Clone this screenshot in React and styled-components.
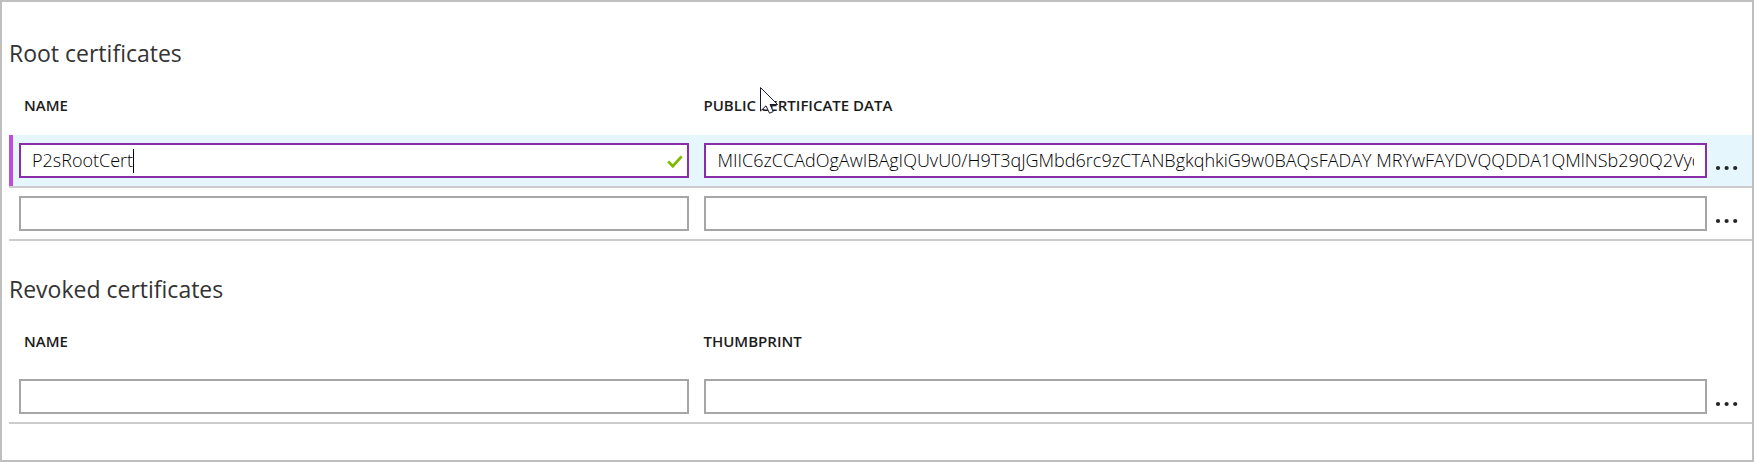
import React, { useState } from "react";
import styled, { createGlobalStyle, css } from "styled-components";

const GlobalStyle = createGlobalStyle`
  *, *::before, *::after { box-sizing: border-box; }
  body {
    margin: 0;
    background: #fff;
    color: #1c1c1c;
    font-family: "Open Sans", "Noto Sans", sans-serif;
  }
`;

const Panel = styled.main`
  display: flex;
  flex-direction: column;
  gap: 32px;
  padding: 35px 0 36px 7px;
  border: 2px solid #bfbfbf;
`;

const Heading = styled.h2`
  margin: 0;
  color: #333;
  font-size: 23px;
  font-weight: 400;
  line-height: 32px;
`;

const Table = styled.table`
  width: 100%;
  table-layout: fixed;
  border-collapse: separate;
  border-spacing: 0;
`;

const NameCol = styled.col`
  width: 39.5%;
`;

const MenuCol = styled.col`
  width: 45px;
`;

const HeadCell = styled.th`
  padding: 26px 0 20px ${(p) => (p.$first ? 15 : 6)}px;
  font-size: 15px;
  font-weight: 600;
  line-height: 20px;
  text-align: left;
`;

const HeadLabel = styled.span`
  position: relative;
`;

const Row = styled.tr`
  background: ${(p) => (p.$active ? "#e5f7fd" : "transparent")};
`;

const Cell = styled.td`
  padding: 8px 0 8px 7px;
  border-bottom: 2px solid #ccc;
`;

const NameCell = styled(Cell)`
  padding: 8px 8px 8px 10px;
  ${(p) => p.$active && css`box-shadow: inset 4px 0 #bf4ddb;`}
`;

const MenuCell = styled(Cell)`
  padding: 8px 0;
`;

const Field = styled.div`
  display: flex;
  align-items: center;
  height: 35px;
  padding: 0 11px;
  border: 2px solid ${(p) => (p.$active ? "#892da8" : "#a6a6a6")};
  background: #fff;
`;

const TextInput = styled.input`
  flex: ${(p) => (p.$fit ? "0 1 auto" : "1")};
  ${(p) => p.$fit && css`field-sizing: content;`}
  min-width: 0;
  height: 29px;
  padding: 0 0 2px;
  border: 0;
  outline: 0;
  background: none;
  color: #000;
  font-family: inherit;
  font-size: 18px;
  font-weight: 300;
`;

const Caret = styled.span`
  width: 1px;
  height: 24px;
  background: #000;
`;

const Check = styled.svg`
  flex: none;
  margin: 2px -7px 0 auto;
`;

const MenuButton = styled.button`
  display: flex;
  align-items: flex-end;
  height: 35px;
  padding: 0 8px 7px;
  border: 0;
  background: none;
  color: #252525;
  cursor: pointer;
`;

const Pointer = styled.svg`
  position: absolute;
  top: -8px;
  left: 57px;
`;

function CertRow({ name, data, dataLabel, active }) {
  const [nameValue, setName] = useState(name);
  const [dataValue, setData] = useState(data);
  return (
    <Row $active={active}>
      <NameCell $active={active}>
        <Field $active={active}>
          <TextInput
            aria-label="Name"
            $fit={active}
            value={nameValue}
            onChange={(e) => setName(e.target.value)}
          />
          {active && <Caret />}
          {active && (
            <Check width="16" height="14" viewBox="0 0 16 14" aria-hidden="true">
              <path d="M1.2 6.4 L5.8 11.2 L14.6 1.4" fill="none" stroke="#7fba00" strokeWidth="2.8" />
            </Check>
          )}
        </Field>
      </NameCell>
      <Cell>
        <Field $active={active}>
          <TextInput
            aria-label={dataLabel}
            value={dataValue}
            onChange={(e) => setData(e.target.value)}
          />
        </Field>
      </Cell>
      <MenuCell>
        <MenuButton type="button" aria-label="More options">
          <svg width="24" height="6" viewBox="0 0 24 6" fill="currentColor" aria-hidden="true">
            <circle cx="3" cy="3" r="2.1" />
            <circle cx="11.6" cy="3" r="2.1" />
            <circle cx="20.2" cy="3" r="2.1" />
          </svg>
        </MenuButton>
      </MenuCell>
    </Row>
  );
}

function CertSection({ title, dataHeader, dataLabel, rows, pointer }) {
  return (
    <section>
      <Heading>{title}</Heading>
      <Table>
        <colgroup>
          <NameCol />
          <col />
          <MenuCol />
        </colgroup>
        <thead>
          <tr>
            <HeadCell $first>NAME</HeadCell>
            <HeadCell>
              <HeadLabel>
                {dataHeader}
                {pointer && (
                  <Pointer width="20" height="28" viewBox="0 0 20 28" aria-hidden="true">
                    <path
                      d="M0.5 0.5 V24 L6 18.8 L9.5 26.2 L13.2 24.6 L10 17.5 H17.5 Z"
                      fill="#fff"
                      stroke="#1b1b2b"
                    />
                  </Pointer>
                )}
              </HeadLabel>
            </HeadCell>
            <td />
          </tr>
        </thead>
        <tbody>
          {rows.map((row, i) => (
            <CertRow key={i} dataLabel={dataLabel} {...row} />
          ))}
        </tbody>
      </Table>
    </section>
  );
}

const rootRows = [
  {
    name: "P2sRootCert",
    data: "MIIC6zCCAdOgAwIBAgIQUvU0/H9T3qJGMbd6rc9zCTANBgkqhkiG9w0BAQsFADAY MRYwFAYDVQQDDA1QMlNSb290Q2Vyd",
    active: true,
  },
  { name: "", data: "" },
];

const revokedRows = [{ name: "", data: "" }];

export default function App() {
  return (
    <>
      <GlobalStyle />
      <Panel>
        <CertSection
          title="Root certificates"
          dataHeader="PUBLIC CERTIFICATE DATA"
          dataLabel="Public certificate data"
          rows={rootRows}
          pointer
        />
        <CertSection
          title="Revoked certificates"
          dataHeader="THUMBPRINT"
          dataLabel="Thumbprint"
          rows={revokedRows}
        />
      </Panel>
    </>
  );
}
